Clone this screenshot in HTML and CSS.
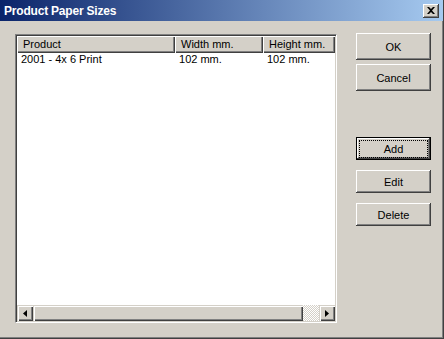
FILE: index.html
```html
<!DOCTYPE html>
<html>
<head>
<meta charset="utf-8">
<link rel="stylesheet" href="styles.css">
</head>
<body>
<div class="window">
  <div class="titlebar">
    <span class="title">Product Paper Sizes</span>
    <button class="close"><svg width="8" height="7" viewBox="0 0 8 7"><path d="M0 0h2l2 2 2-2h2L5 3.5 8 7H6L4 5 2 7H0l3-3.5z" fill="#000"/></svg></button>
  </div>
  <div class="content">
    <div class="list">
      <div class="header">
        <div class="hcell c1">Product</div>
        <div class="hcell c2">Width mm.</div>
        <div class="hcell c3">Height mm.</div>
      </div>
      <div class="rows">
        <div class="row">
          <div class="cell c1">2001 - 4x 6 Print</div>
          <div class="cell c2">102 mm.</div>
          <div class="cell c3">102 mm.</div>
        </div>
      </div>
      <div class="hscroll">
        <div class="sbtn"><svg width="4" height="7" viewBox="0 0 4 7"><path d="M4 0v7L0 3.5z" fill="#000"/></svg></div>
        <div class="thumb"></div>
        <div class="track"></div>
        <div class="sbtn"><svg width="4" height="7" viewBox="0 0 4 7"><path d="M0 0v7l4-3.5z" fill="#000"/></svg></div>
      </div>
    </div>
    <div class="buttons">
      <button class="btn">OK</button>
      <button class="btn">Cancel</button>
      <button class="btn def gap"><span class="focus">Add</span></button>
      <button class="btn">Edit</button>
      <button class="btn">Delete</button>
    </div>
  </div>
</div>
</body>
</html>
```
FILE: styles.css
```css
* { box-sizing: border-box; }
html, body { margin: 0; padding: 0; }
body { background: #D4D0C8; font-family: "Liberation Sans", Arial, sans-serif; font-size: 11px; color: #000; }
.window {
  width: 444px; height: 339px; background: #D4D0C8;
  border-right: 1px solid #404040; border-bottom: 1px solid #404040;
  box-shadow: inset -1px -1px 0 #808080;
  display: flex; flex-direction: column;
}
.titlebar {
  height: 21px; flex: none;
  background: linear-gradient(to right, #0A246A, #A6CAF0);
  display: flex; align-items: center; justify-content: space-between;
  padding: 0 4px 0 4px;
}
.title { color: #fff; font-weight: bold; font-size: 12px; letter-spacing: -0.2px; }
.close {
  width: 16px; height: 14px; padding: 0; margin: 0;
  background: #D4D0C8;
  border: none;
  box-shadow: inset -1px -1px 0 #404040, inset 1px 1px 0 #fff, inset -2px -2px 0 #808080;
  display: flex; align-items: center; justify-content: center;
}
.content { display: flex; padding: 13px 0 0 15px; }
.list {
  width: 322px; height: 289px; background: #fff;
  border-top: 1px solid #808080; border-left: 1px solid #808080;
  border-right: 1px solid #fff; border-bottom: 1px solid #fff;
  box-shadow: inset 1px 1px 0 #404040, inset -1px -1px 0 #D4D0C8;
  padding: 1px;
  display: flex; flex-direction: column;
}
.header { display: flex; height: 17px; flex: none; }
.hcell {
  background: #D4D0C8; height: 17px; padding: 2px 6px 0 6px;
  box-shadow: inset 1px 1px 0 #fff, inset -1px -1px 0 #404040, inset -2px -2px 0 #808080;
  white-space: nowrap; overflow: hidden;
}
.c1 { width: 160px; }
.c2 { width: 89px; }
.c3 { width: 72px; flex: none; }
.rows { flex: 1; }
.row { display: flex; height: 14px; }
.cell { padding: 0 4px 0 4px; white-space: nowrap; }
.hscroll { height: 16px; flex: none; display: flex; }
.sbtn {
  width: 16px; height: 16px; background: #D4D0C8; flex: none;
  box-shadow: inset 1px 1px 0 #D4D0C8, inset 2px 2px 0 #fff, inset -1px -1px 0 #404040, inset -2px -2px 0 #808080;
  display: flex; align-items: center; justify-content: center;
}
.thumb {
  width: 270px; height: 16px; background: #D4D0C8; flex: none;
  box-shadow: inset 1px 1px 0 #D4D0C8, inset 2px 2px 0 #fff, inset -1px -1px 0 #404040, inset -2px -2px 0 #808080;
}
.track {
  flex: 1;
  background-color: #fff;
  background-image: repeating-conic-gradient(#D4D0C8 0 25%, #fff 0 50%);
  background-size: 2px 2px;
}
.buttons { display: flex; flex-direction: column; margin-left: 19px; margin-top: -1px; }
.btn {
  width: 75px; height: 27px; margin: 0 0 4px 0; padding: 0;
  font-family: "Liberation Sans", Arial, sans-serif; font-size: 11px; color: #000;
  background: #D4D0C8; border: none;
  box-shadow: inset -1px -1px 0 #404040, inset 1px 1px 0 #fff, inset -2px -2px 0 #808080;
}
.btn.gap { margin-top: 42px; }
.btn.def {
  box-shadow: inset 0 0 0 1px #000, inset -2px -2px 0 #404040, inset 2px 2px 0 #fff, inset -3px -3px 0 #808080;
}
.focus {
  display: flex; align-items: center; justify-content: center;
  margin: 0 4px; height: 16px; outline: 1px dotted #000;
}
.btn.def, .btn.def ~ .btn { height: 23px; margin-bottom: 10px; }
```
